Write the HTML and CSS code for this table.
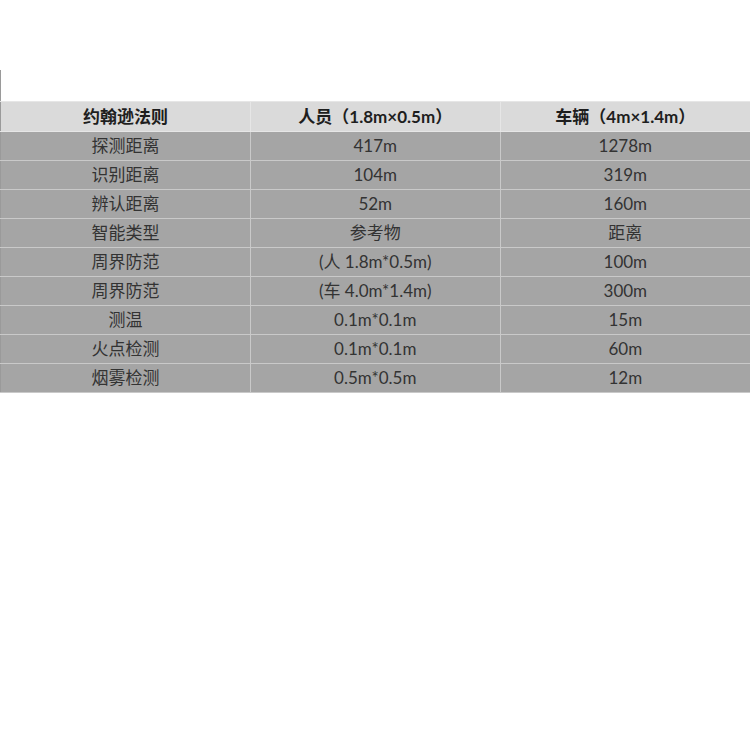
FILE: index.html
```html
<!DOCTYPE html>
<html lang="zh">
<head>
<meta charset="utf-8">
<link rel="stylesheet" href="styles.css">
</head>
<body>
<div class="top"><div class="mark"></div></div>
<table class="grid">
<thead>
<tr><th>约翰逊法则</th><th>人员（1.8m×0.5m）</th><th>车辆（4m×1.4m）</th></tr>
</thead>
<tbody>
<tr><td>探测距离</td><td>417m</td><td>1278m</td></tr>
<tr><td>识别距离</td><td>104m</td><td>319m</td></tr>
<tr><td>辨认距离</td><td>52m</td><td>160m</td></tr>
<tr><td>智能类型</td><td>参考物</td><td>距离</td></tr>
<tr><td>周界防范</td><td>(人 1.8m*0.5m)</td><td>100m</td></tr>
<tr><td>周界防范</td><td>(车 4.0m*1.4m)</td><td>300m</td></tr>
<tr><td>测温</td><td>0.1m*0.1m</td><td>15m</td></tr>
<tr><td>火点检测</td><td>0.1m*0.1m</td><td>60m</td></tr>
<tr><td>烟雾检测</td><td>0.5m*0.5m</td><td>12m</td></tr>
</tbody>
</table>
</body>
</html>
```
FILE: styles.css
```css
html, body {
  margin: 0;
  padding: 0;
  background: #ffffff;
}
body {
  font-family: Lato, "Noto Sans CJK SC", sans-serif;
}
.top {
  height: 101px;
  display: flex;
  align-items: flex-end;
}
.mark {
  width: 1px;
  height: 31px;
  background: #9a9a9a;
}
.grid {
  width: 750px;
  border-collapse: collapse;
  table-layout: fixed;
}
.grid th, .grid td {
  height: 28px;
  padding: 0;
  text-align: center;
  font-size: 17px;
  line-height: 28px;
  border: 1px solid #c9c9c9;
}
.grid th {
  height: 29px;
  background: #dadada;
  color: #1e1e1e;
  font-weight: bold;
  border-color: #e6e6e6;
}
.grid td {
  background: #a5a5a5;
  color: #333333;
}
.grid tr > :first-child { border-left-color: #9a9a9a; }
.grid tr > :last-child { border-right: none; }
```
